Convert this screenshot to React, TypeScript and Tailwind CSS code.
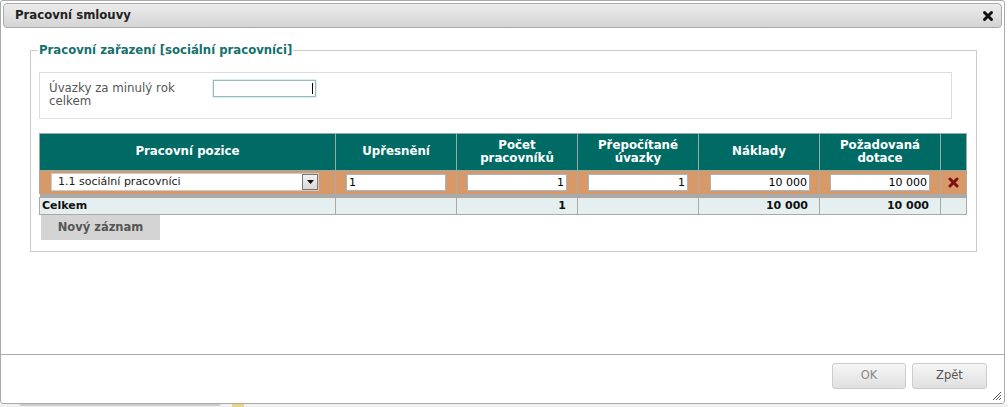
import React from 'react';

function CloseIcon() {
  return (
    <svg width="12" height="12" viewBox="0 0 12 12">
      <path d="M2.5 2.5 L9.5 9.5 M9.5 2.5 L2.5 9.5" stroke="#111" strokeWidth="3" strokeLinecap="round" />
    </svg>
  );
}

function DeleteIcon() {
  return (
    <svg width="11" height="11" viewBox="0 0 11 11">
      <path d="M2 2 L9 9 M9 2 L2 9" stroke="#7d1212" strokeWidth="3" strokeLinecap="round" />
    </svg>
  );
}

function NumInput({ value, align = 'right' }: { value: string; align?: 'left' | 'right' }) {
  return (
    <div
      className={`h-[17px] w-[100px] border border-[#a9b4c2] bg-white px-[2px] text-[11px] leading-[15px] text-black ${
        align === 'right' ? 'text-right' : 'text-left'
      }`}
    >
      {value}
    </div>
  );
}

export default function App() {
  const cols = ['w-[296px]', 'w-[121px]', 'w-[121px]', 'w-[121px]', 'w-[121px]', 'w-[121px]', 'w-[26px]'];
  return (
    <div
      className="flex h-[407px] w-[1008px] flex-col overflow-hidden bg-white text-[11px] text-[#333]"
      style={{ fontFamily: '"DejaVu Sans", Verdana, sans-serif' }}
    >
      <div className="flex h-[404px] w-[1005px] flex-col rounded-[3px] border border-[#aaa] bg-white">
        {/* title bar */}
        <div className="mx-[2px] mt-[2px] flex h-[25px] items-center justify-between rounded-[4px] border border-[#aaa] bg-gradient-to-b from-[#ececec] to-[#d4d4d4] pl-[11px] pr-[7px]">
          <span className="text-[11.7px] font-bold text-[#222]">Pracovní smlouvy</span>
          <CloseIcon />
        </div>

        {/* content */}
        <div className="flex-1 pl-[29px] pt-[14px]">
          <fieldset className="h-[210px] w-[947px] border border-[#ccc] pl-[8px] pr-[9px]">
            <legend className="ml-[-1px] px-[1px] text-[11.7px] font-bold text-[#16706c]">
              Pracovní zařazení [sociální pracovníci]
            </legend>

            <div className="mt-[12px] flex h-[47px] w-[913px] items-start border border-[#ddd] pl-[9px] pt-[7px]">
              <div className="mt-[2px] w-[164px] text-[11.8px] leading-[13px] text-[#555]">
                Úvazky za minulý rok
                <br />
                celkem
              </div>
              <div className="h-[17px] w-[103px] border border-[#9bb] bg-white shadow-[0_0_2px_#8cc]">
                <div className="ml-[98px] mt-[2px] h-[11px] w-[1px] bg-black" />
              </div>
            </div>

            <table className="mt-[14px] w-[928px] border-collapse text-[11px]">
              <thead>
                <tr className="h-[37px] bg-[#006b64] text-[11.8px] font-bold leading-[13px] text-white">
                  <th className={`${cols[0]} border border-[#9aa]`}>Pracovní pozice</th>
                  <th className={`${cols[1]} border border-[#9aa]`}>Upřesnění</th>
                  <th className={`${cols[2]} border border-[#9aa]`}>
                    Počet
                    <br />
                    pracovníků
                  </th>
                  <th className={`${cols[3]} border border-[#9aa]`}>
                    Přepočítané
                    <br />
                    úvazky
                  </th>
                  <th className={`${cols[4]} border border-[#9aa]`}>Náklady</th>
                  <th className={`${cols[5]} border border-[#9aa]`}>
                    Požadovaná
                    <br />
                    dotace
                  </th>
                  <th className={`${cols[6]} border border-[#9aa]`} />
                </tr>
              </thead>
              <tbody>
                <tr className="h-[24px] bg-[#d89968]">
                  <td className="border-x border-[#aaa] pl-[11px] pr-[16px]">
                    <div className="flex h-[18px] items-center border border-[#ccc] bg-white pl-[6px]">
                      <span className="flex-1 text-[11px] text-[#222]">1.1 sociální pracovníci</span>
                      <div className="flex h-[16px] w-[16px] items-center justify-center border border-[#777] bg-gradient-to-b from-[#f4f4f4] to-[#d8d8d8]">
                        <svg width="7" height="4" viewBox="0 0 7 4">
                          <path d="M0 0 L7 0 L3.5 4 Z" fill="#111" />
                        </svg>
                      </div>
                    </div>
                  </td>
                  <td className="border-x border-[#aaa] pl-[10px]">
                    <NumInput value="1" align="left" />
                  </td>
                  <td className="border-x border-[#aaa] pl-[10px]">
                    <NumInput value="1" />
                  </td>
                  <td className="border-x border-[#aaa] pl-[10px]">
                    <NumInput value="1" />
                  </td>
                  <td className="border-x border-[#aaa] pl-[11px]">
                    <NumInput value="10 000" />
                  </td>
                  <td className="border-x border-[#aaa] pl-[10px]">
                    <NumInput value="10 000" />
                  </td>
                  <td className="border-x border-[#aaa]">
                    <div className="flex justify-center pt-[1px]">
                      <DeleteIcon />
                    </div>
                  </td>
                </tr>
                <tr className="h-[3px] bg-[#aaa]">
                  <td colSpan={7} className="p-0" />
                </tr>
                <tr className="h-[15px] bg-[#e6eff0] font-bold text-[#111]">
                  <td className="border border-[#aaa] pl-[2px]">Celkem</td>
                  <td className="border border-[#aaa]" />
                  <td className="border border-[#aaa] pr-[11px] text-right">1</td>
                  <td className="border border-[#aaa]" />
                  <td className="border border-[#aaa] pr-[11px] text-right">10 000</td>
                  <td className="border border-[#aaa] pr-[11px] text-right">10 000</td>
                  <td className="border border-[#aaa]" />
                </tr>
              </tbody>
            </table>

            <button className="ml-[2px] h-[25px] w-[119px] bg-[#d4d4d4] text-[11.5px] font-bold text-[#555]">
              Nový záznam
            </button>
          </fieldset>
        </div>

        {/* footer */}
        <div className="relative flex h-[49px] items-start justify-end gap-[6px] border-t border-[#aaa] pr-[17px] pt-[8px]">
          <button className="h-[26px] w-[74px] rounded-[3px] border border-[#ccc] bg-gradient-to-b from-[#f6f6f6] to-[#e0e0e0] text-[11.5px] text-[#888]">
            OK
          </button>
          <button className="h-[26px] w-[75px] rounded-[3px] border border-[#ccc] bg-gradient-to-b from-[#f6f6f6] to-[#e0e0e0] text-[11.5px] text-[#555]">
            Zpět
          </button>
          <svg className="absolute bottom-[2px] right-[2px]" width="10" height="10" viewBox="0 0 10 10">
            <path d="M9 1 L1 9 M9 4 L4 9 M9 7 L7 9" stroke="#555" strokeWidth="1" />
          </svg>
        </div>
      </div>
      <div className="flex h-[3px] items-start bg-[#f0f0f0] pl-[20px]">
        <div className="h-[2px] w-[200px] bg-[#ccc]" />
        <div className="ml-[12px] h-[3px] w-[12px] bg-[#e8d58a]" />
      </div>
    </div>
  );
}
